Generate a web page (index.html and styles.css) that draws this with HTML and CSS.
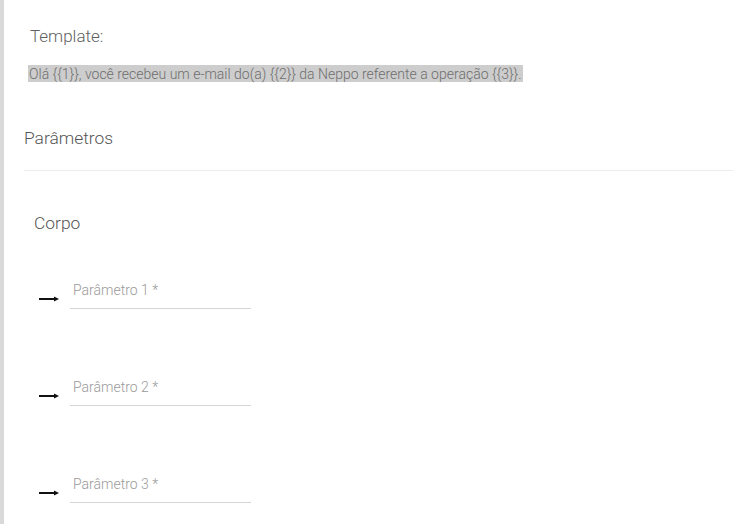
FILE: index.html
```html
<!DOCTYPE html>
<html lang="pt">
<head>
<meta charset="utf-8">
<link rel="stylesheet" href="styles.css">
</head>
<body>
<div class="page">
  <section class="template">
    <h2 class="template-title">Template:</h2>
    <p class="template-text"><span class="hl">Olá {{1}}, você recebeu um e-mail do(a) {{2}} da Neppo referente a operação {{3}}.</span></p>
  </section>
  <section class="params">
    <h3 class="params-title">Parâmetros</h3>
    <hr class="divider">
    <h4 class="body-title">Corpo</h4>
    <div class="param-list">
      <div class="param-row">
        <svg class="arrow" width="20" height="8" viewBox="0 0 20 8"><path d="M0 4H16" stroke="#111" stroke-width="2"/><path d="M15 1.5L20 4L15 6.5Z" fill="#111"/></svg>
        <div class="field"><span class="placeholder">Parâmetro 1 *</span></div>
      </div>
      <div class="param-row">
        <svg class="arrow" width="20" height="8" viewBox="0 0 20 8"><path d="M0 4H16" stroke="#111" stroke-width="2"/><path d="M15 1.5L20 4L15 6.5Z" fill="#111"/></svg>
        <div class="field"><span class="placeholder">Parâmetro 2 *</span></div>
      </div>
      <div class="param-row">
        <svg class="arrow" width="20" height="8" viewBox="0 0 20 8"><path d="M0 4H16" stroke="#111" stroke-width="2"/><path d="M15 1.5L20 4L15 6.5Z" fill="#111"/></svg>
        <div class="field"><span class="placeholder">Parâmetro 3 *</span></div>
      </div>
    </div>
  </section>
</div>
</body>
</html>
```

FILE: styles.css
```css
html, body {
  margin: 0;
  padding: 0;
  background: #fff;
  font-family: Roboto, "Liberation Sans", sans-serif;
}
.page {
  border-left: 4px solid #d9d9d9;
  min-height: 524px;
  box-sizing: border-box;
  overflow: hidden;
}
.template {
  padding: 26px 0 0 24px;
}
.template-title {
  margin: 0 0 0 2px;
  font-size: 17px;
  font-weight: 300;
  line-height: 20px;
  color: #5f5f5f;
}
.template-text {
  margin: 20px 0 0 0;
  font-size: 14px;
  font-weight: 300;
  line-height: 17px;
  color: #6e6e6e;
}
.hl {
  background: #cdcdcd;
  padding: 1px 1px 0 1px;
}
.params {
  padding: 0 0 0 20px;
}
.params-title {
  margin: 45px 0 0 0;
  font-size: 17.4px;
  font-weight: 300;
  line-height: 20px;
  color: #555;
}
.divider {
  border: 0;
  border-top: 1px solid #ececec;
  margin: 22px 0 0 0;
}
.body-title {
  margin: 42px 0 0 10px;
  font-size: 17.4px;
  font-weight: 300;
  line-height: 20px;
  color: #555;
}
.param-list {
  display: flex;
  flex-direction: column;
  gap: 65px;
  margin-top: 44px;
}
.param-row {
  display: flex;
  align-items: flex-end;
  padding-left: 15px;
}
.arrow {
  display: block;
  margin-bottom: 6px;
}
.field {
  width: 181px;
  height: 32px;
  margin-left: 11px;
  border-bottom: 1px solid #d5d5d5;
  box-sizing: border-box;
  padding: 3px 0 0 3px;
}
.placeholder {
  font-size: 14px;
  font-weight: 300;
  line-height: 16px;
  color: #9a9a9a;
}
```
